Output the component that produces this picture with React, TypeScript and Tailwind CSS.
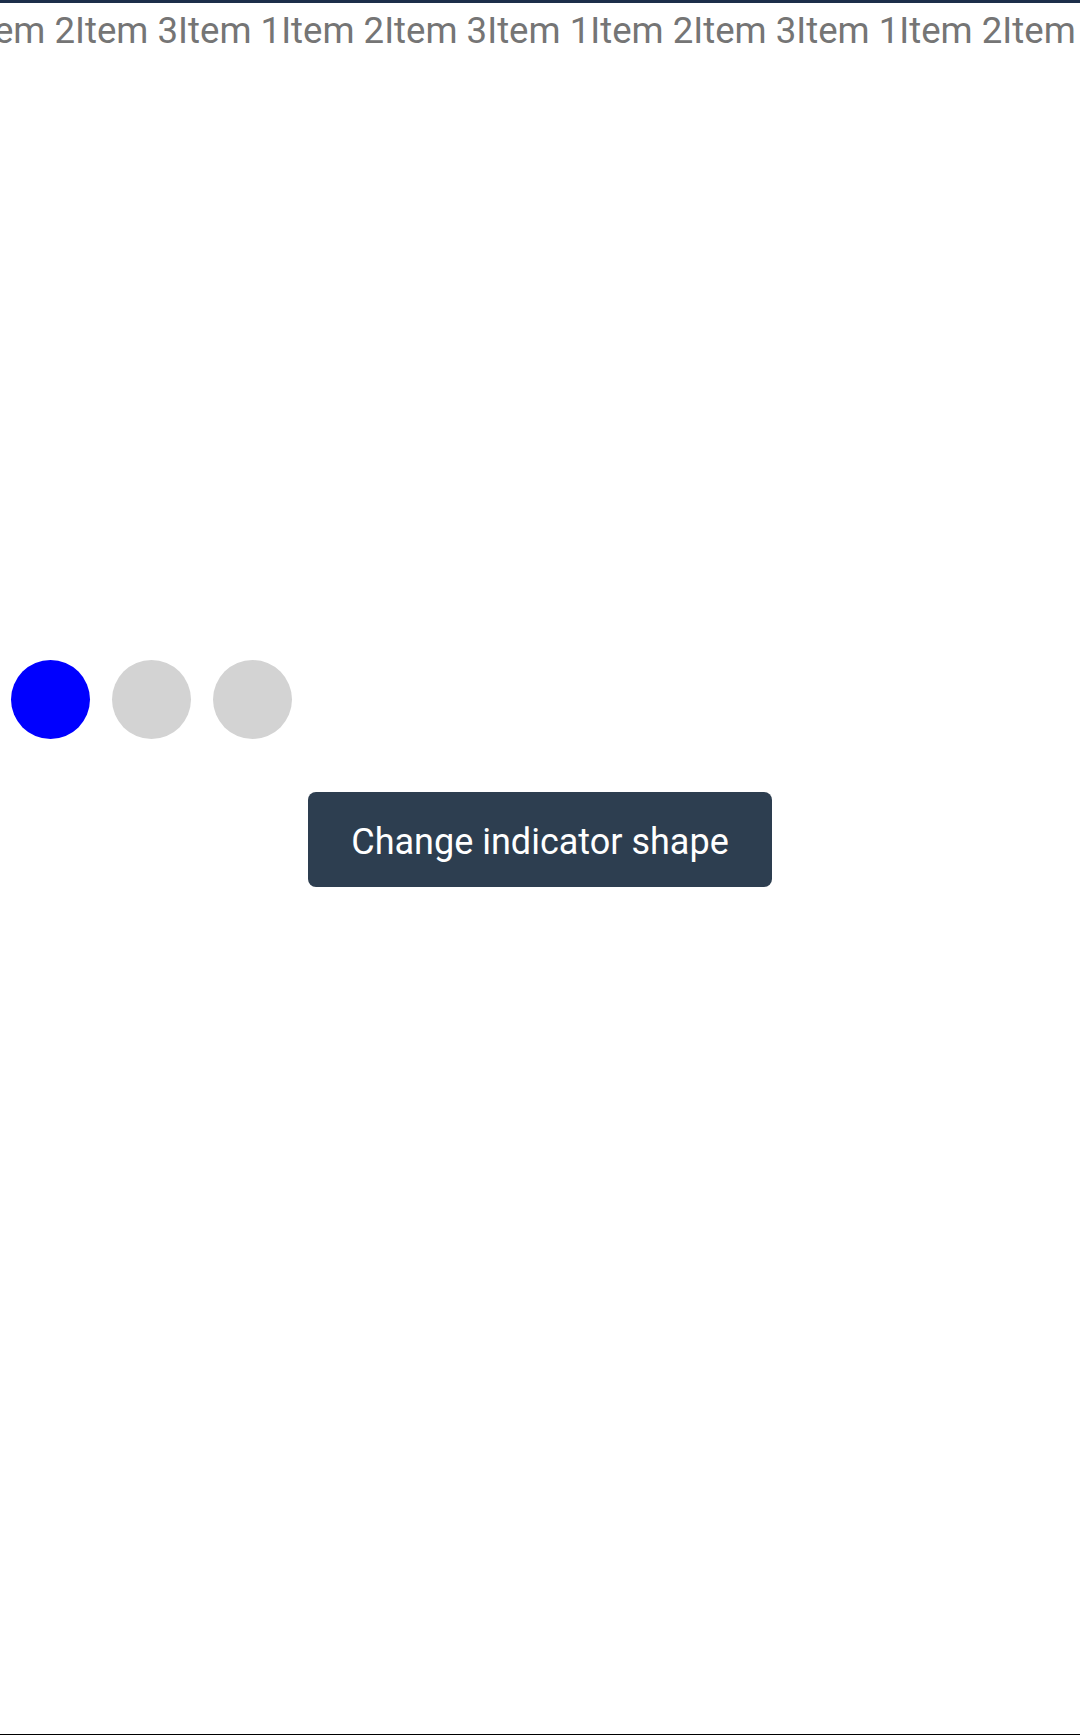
import React from "react";

const items = ["Item 1", "Item 2", "Item 3"];

export default function App() {
  const seq: string[] = [];
  for (let i = 0; i < 5; i++) seq.push(...items);
  return (
    <div
      className="w-[1080px] h-[1735px] bg-white border-t-[3px] border-[#1c2f4a] border-b border-b-black overflow-hidden flex flex-col"
      style={{ fontFamily: "Roboto, 'Noto Sans', sans-serif" }}
    >
      <div className="mt-[7px] h-[42px] overflow-hidden">
        <div className="flex whitespace-nowrap -ml-[131px] text-[36.6px] leading-[42px] text-[#757575]">
          {seq.map((s, i) => (
            <span key={i}>{s}</span>
          ))}
        </div>
      </div>
      <div className="mt-[608px] flex gap-[22px] pl-[11px]">
        <div className="w-[79px] h-[79px] rounded-full bg-[#0000ff]" />
        <div className="w-[79px] h-[79px] rounded-full bg-[#d3d3d3]" />
        <div className="w-[79px] h-[79px] rounded-full bg-[#d3d3d3]" />
      </div>
      <div className="mt-[53px] flex justify-center">
        <button className="w-[464px] h-[95px] pt-[4px] rounded-[8px] bg-[#2d3e50] text-white text-[36px] flex items-center justify-center">
          Change indicator shape
        </button>
      </div>
    </div>
  );
}
